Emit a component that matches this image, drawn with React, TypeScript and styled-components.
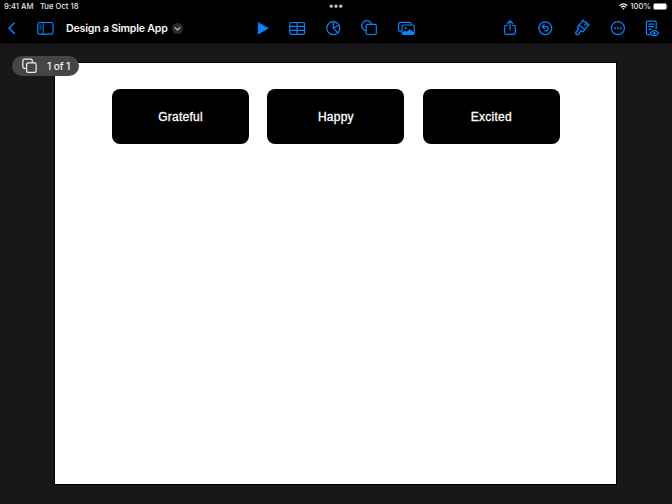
import React from "react";
import styled, { createGlobalStyle } from "styled-components";

const Global = createGlobalStyle`
  * { box-sizing: border-box; }
  body { margin: 0; background: #18181a; font-family: Inter, "Liberation Sans", sans-serif; overflow: hidden; }
  svg { display: block; flex: none; }
`;

const Screen = styled.div`
  width: 672px;
  height: 504px;
  display: flex;
  flex-direction: column;
  background: #18181a;
`;

const Header = styled.header`
  height: 44px;
  background: #000;
  border-bottom: 1px solid #111113;
`;

const StatusBar = styled.div`
  height: 13px;
  display: grid;
  grid-template-columns: 1fr 16px 1fr;
  align-items: center;
  padding: 0 4px;
  color: #e6e6e6;
  font-size: 7.7px;
  font-weight: 500;
  line-height: 13px;
`;

const StatusGroup = styled.div<{ $end?: boolean }>`
  display: flex;
  align-items: center;
  height: 13px;
  gap: ${(p) => (p.$end ? "2px" : "6.5px")};
  justify-content: ${(p) => (p.$end ? "flex-end" : "flex-start")};
`;

const StatusText = styled.span<{ $spacing?: number }>`
  white-space: nowrap;
  letter-spacing: ${(p) => p.$spacing ?? 0}px;
`;

const Toolbar = styled.div`
  height: 30px;
  display: grid;
  grid-template-columns: 243.5px 247.5px 180px;
  align-items: center;
  color: #0a84ff;
`;

const Group = styled.div`
  display: flex;
  align-items: center;
`;

const Glyph = styled.svg`
  width: 36px;
  height: 30px;
  fill: none;
  stroke: currentColor;
  stroke-width: 1.2;
  stroke-linecap: round;
  stroke-linejoin: round;
`;

const BackGlyph = styled(Glyph)`
  width: 26px;
`;

const Title = styled.h1`
  margin: 0 5px 0 4px;
  width: 101px;
  height: 30px;
  white-space: nowrap;
  color: #f5f5f5;
  font-size: 10.6px;
  font-weight: 600;
  line-height: 31px;
  letter-spacing: -0.2px;
`;

const TitleMenu = styled.svg`
  width: 11px;
  height: 11px;
`;

const Workspace = styled.main`
  flex: 1;
  position: relative;
  padding: 18px 0 0 54px;
`;

const Sheet = styled.section`
  width: 563px;
  height: 423px;
  background: #fff;
  border: 1px solid #000;
  padding: 26px 55px 0 57px;
`;

const Cards = styled.div`
  display: grid;
  grid-template-columns: repeat(3, 137px);
  column-gap: 18.4px;
`;

const Card = styled.div`
  height: 55px;
  padding-top: 0.8px;
  border-radius: 8px;
  background: #000;
  color: #fff;
  display: flex;
  align-items: center;
  justify-content: center;
  font-family: "Liberation Sans", sans-serif;
  font-size: 12px;
  letter-spacing: 0.25px;
  -webkit-text-stroke: 0.3px #fff;
`;

const PageBadge = styled.div`
  position: absolute;
  left: 12px;
  top: 12px;
  width: 67px;
  height: 20px;
  border-radius: 10px;
  background: #454547;
  color: #f2f2f2;
  display: flex;
  align-items: center;
  gap: 9px;
  padding-left: 10px;
  font-size: 10.2px;
  font-weight: 500;
  letter-spacing: -0.15px;
  white-space: nowrap;
`;

const emotions = ["Grateful", "Happy", "Excited"];

export default function App() {
  return (
    <Screen>
      <Global />
      <Header>
        <StatusBar>
          <StatusGroup>
            <StatusText $spacing={-0.05}>9:41 AM</StatusText>
            <StatusText>Tue Oct 18</StatusText>
          </StatusGroup>
          <svg width="16" height="13" fill="#c8c8c8">
            <circle cx="3.2" cy="6.2" r="1.6" />
            <circle cx="8" cy="6.2" r="1.6" />
            <circle cx="12.8" cy="6.2" r="1.6" />
          </svg>
          <StatusGroup $end>
            <svg width="9" height="7" viewBox="0 0 9 7" fill="none" stroke="#eee" strokeWidth="1.3">
              <path d="M.6 2.7Q4.5-.9 8.4 2.7M2.2 4.4Q4.5 2.2 6.8 4.4" />
              <path d="M3.3 5.4Q4.5 4.6 5.7 5.4L4.5 6.7Z" fill="#eee" stroke="none" />
            </svg>
            <StatusText>100%</StatusText>
            <svg width="15" height="7" viewBox="0 0 15 7">
              <rect x=".3" y=".3" width="13.4" height="6.4" rx="1.8" fill="#555" stroke="#888" strokeWidth=".5" />
              <rect x=".8" y=".8" width="12.4" height="5.4" rx="1.2" fill="#fff" />
              <path d="M14.2 2.4v2.2q.8-.3.8-1.1t-.8-1.1" fill="#888" />
            </svg>
          </StatusGroup>
        </StatusBar>
        <Toolbar>
          <Group>
            <BackGlyph viewBox="0 0 26 30">
              <path d="M14.4 10 9 15.2l5.4 5.2" strokeWidth="1.5" />
            </BackGlyph>
            <Glyph viewBox="0 0 36 30">
              <rect x="11.8" y="9.5" width="15.2" height="11.6" rx="1.7" />
              <path d="M17.2 9.5v11.6M13.8 12.2h1.4M13.8 14.2h1.4M13.8 16.2h1.4" strokeWidth=".9" />
            </Glyph>
            <Title>Design a Simple App</Title>
            <TitleMenu viewBox="0 0 11 11">
              <circle cx="5.5" cy="5.5" r="5.5" fill="#2b2b2e" />
              <path d="m3 4.6 2.5 2.3L8 4.6" fill="none" stroke="#c8c8ca" strokeWidth="1.1" strokeLinecap="round" />
            </TitleMenu>
          </Group>
          <Group>
            <Glyph viewBox="0.5 0 36 30">
              <path d="M14.8 9.9v11l9.7-5.5Z" fill="currentColor" strokeWidth=".8" />
            </Glyph>
            <Glyph viewBox="0.5 0 36 30">
              <rect x="10.2" y="9.5" width="14.8" height="11.8" rx="1.6" />
              <path d="M17.6 9.5v11.8M10.2 13.4H25M10.2 17.3H25" />
            </Glyph>
            <Glyph viewBox="0.5 0 36 30">
              <circle cx="17.8" cy="15.2" r="6.5" />
              <path d="M17.8 8.7v6.5l4.6 4.6M17.8 15.2l5.4-3.3" />
            </Glyph>
            <Glyph viewBox="0.5 0.3 36 30">
              <path d="M14.2 18.1A5.1 5.1 0 1 1 20.2 11.4" />
              <rect x="14.6" y="11.6" width="10.2" height="10.2" rx="1.5" />
            </Glyph>
            <Glyph viewBox="0.2 0 36 30">
              <path d="M13.1 18.2h-.9q-1.4 0-1.4-1.4v-6.1q0-1.4 1.4-1.4h9.6q1.4 0 1.4 1.4v.8" />
              <rect x="14.2" y="12" width="12.2" height="9.3" rx="1.5" />
              <circle cx="17.7" cy="15" r="1.1" fill="currentColor" stroke="none" />
              <path d="M14.4 19.8 17 17.6l1.8 1.2 3.2-2.6 4.2 3.4v.8q-.2.8-1 .8h-9.8q-1-.1-1-1.4" fill="currentColor" stroke="none" />
            </Glyph>
          </Group>
          <Group>
            <Glyph viewBox="0.5 0 36 30">
              <path d="M16.8 12.4h-1q-1.6 0-1.6 1.6v5.8q0 1.6 1.6 1.6h7.4q1.6 0 1.6-1.6V14q0-1.6-1.6-1.6h-1M19.5 17V8M16.9 10.3 19.5 7.8l2.6 2.5" />
            </Glyph>
            <Glyph viewBox="0 0 36 30">
              <circle cx="18.3" cy="15.2" r="6.4" />
              <path d="m17.2 11.7-2 2 2 2M15.4 13.7h3.7a2.15 2.15 0 0 1 0 4.3h-1.3" />
            </Glyph>
            <Glyph viewBox="0 0 36 30">
              <g transform="translate(18.3 15.1) rotate(39) scale(1.06)">
                <path d="M-3.4-.9v-6.1q1.5 1.5 3-.3 1.5 1.4 3.8-.1v6.5ZM-3.4-.9v1.7q0 1.3 1.4 1.3h.7l-.3 4.2a1.7 1.7 0 0 0 3.2 0L1.3 2.1h.8q1.3 0 1.3-1.3V-.9M1-6.4v2.3" />
              </g>
            </Glyph>
            <Glyph viewBox="0 0 36 30">
              <circle cx="18.9" cy="15.2" r="6.5" />
              <g fill="currentColor" stroke="none">
                <circle cx="15.9" cy="15.2" r=".95" />
                <circle cx="18.9" cy="15.2" r=".95" />
                <circle cx="21.9" cy="15.2" r=".95" />
              </g>
            </Glyph>
            <Glyph viewBox="0.3 0 36 30">
              <path d="M15.3 21.8h-2.1q-1.5 0-1.5-1.5V9.6q0-1.5 1.5-1.5H20q1.5 0 1.5 1.5v6M14.1 11.1h5M14.1 13.7h5M14.1 16.3h2.3" />
              <path d="M15.4 20.2q1.7-2.5 4.2-2.5t4.2 2.5q-1.7 2.5-4.2 2.5t-4.2-2.5Z" />
              <circle cx="19.6" cy="20.2" r="1.2" fill="currentColor" stroke="none" />
            </Glyph>
          </Group>
        </Toolbar>
      </Header>
      <Workspace>
        <Sheet>
          <Cards>
            {emotions.map((name) => (
              <Card key={name}>{name}</Card>
            ))}
          </Cards>
        </Sheet>
        <PageBadge>
          <svg width="16" height="16" viewBox="0 0 16 16" fill="none" stroke="#f2f2f2" strokeWidth="1.2">
            <path d="M4.2 10.4H2.4Q.9 10.4.9 8.9V2.7q0-1.5 1.5-1.5h6.4q1.5 0 1.5 1.5v1.7" />
            <rect x="4.6" y="4.8" width="9.5" height="9.5" rx="1.6" />
          </svg>
          1 of 1
        </PageBadge>
      </Workspace>
    </Screen>
  );
}
